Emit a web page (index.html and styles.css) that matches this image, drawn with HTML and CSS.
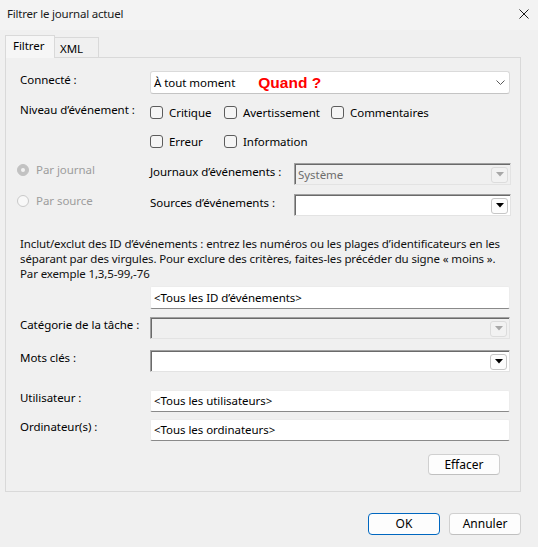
FILE: index.html
```html
<!DOCTYPE html>
<html lang="fr">
<head>
<meta charset="utf-8">
<title>Filtrer le journal actuel</title>
<link rel="stylesheet" href="styles.css">
</head>
<body>
<div class="titlebar">
  <span class="title">Filtrer le journal actuel</span>
  <svg class="close" width="10" height="10" viewBox="0 0 10 10"><path d="M0.5 0.5L9.5 9.5M9.5 0.5L0.5 9.5" stroke="#1a1a1a" stroke-width="1" fill="none"/></svg>
</div>
<div class="tabs">
  <div class="tab tab-active">Filtrer</div>
  <div class="tab">XML</div>
</div>
<div class="panel">
  <div class="row row-when">
    <span class="lbl lbl-when">Connecté :</span>
    <div class="combo-modern">
      <span class="val">À tout moment</span>
      <span class="when">Quand ?</span>
      <svg class="chev" width="9" height="5" viewBox="0 0 9 5"><path d="M0.5 0.5L4.5 4.5L8.5 0.5" stroke="#5a5a5a" stroke-width="1" fill="none"/></svg>
    </div>
  </div>
  <div class="levels">
    <span class="lbl lbl-level">Niveau d’événement :</span>
    <span class="chk"><span class="box"></span>Critique</span>
    <span class="chk"><span class="box"></span>Avertissement</span>
    <span class="chk"><span class="box"></span>Commentaires</span>
    <span class="chk chk-r2"><span class="box"></span>Erreur</span>
    <span class="chk"><span class="box"></span>Information</span>
  </div>
  <div class="srcrow srcrow-first">
    <span class="radio-item"><span class="radio radio-on"></span>Par journal</span>
    <span class="lbl lbl-src">Journaux d’événements :</span>
    <div class="combo-legacy combo-disabled">
      <span class="val">Système</span>
      <span class="dd"><svg width="8" height="5" viewBox="0 0 8 5"><path d="M0 0H8L4 4.5Z" fill="#a8a8a8"/></svg></span>
    </div>
  </div>
  <div class="srcrow">
    <span class="radio-item"><span class="radio"></span>Par source</span>
    <span class="lbl lbl-src">Sources d’événements :</span>
    <div class="combo-legacy">
      <span class="val"></span>
      <span class="dd"><svg width="8" height="5" viewBox="0 0 8 5"><path d="M0 0H8L4 4.5Z" fill="#000"/></svg></span>
    </div>
  </div>
  <p class="help">Inclut/exclut des ID d’événements : entrez les numéros ou les plages d’identificateurs en les<br>séparant par des virgules. Pour exclure des critères, faites-les précéder du signe « moins ».<br>Par exemple 1,3,5-99,-76</p>
  <div class="textbox textbox-id">&lt;Tous les ID d’événements&gt;</div>
  <div class="row row-cat">
    <span class="lbl">Catégorie de la tâche :</span>
    <div class="combo-legacy combo-disabled combo-wide">
      <span class="val"></span>
      <span class="dd"><svg width="8" height="5" viewBox="0 0 8 5"><path d="M0 0H8L4 4.5Z" fill="#a8a8a8"/></svg></span>
    </div>
  </div>
  <div class="row row-kw">
    <span class="lbl">Mots clés :</span>
    <div class="combo-legacy combo-wide">
      <span class="val"></span>
      <span class="dd"><svg width="8" height="5" viewBox="0 0 8 5"><path d="M0 0H8L4 4.5Z" fill="#000"/></svg></span>
    </div>
  </div>
  <div class="row row-user">
    <span class="lbl">Utilisateur :</span>
    <div class="textbox">&lt;Tous les utilisateurs&gt;</div>
  </div>
  <div class="row row-comp">
    <span class="lbl">Ordinateur(s) :</span>
    <div class="textbox">&lt;Tous les ordinateurs&gt;</div>
  </div>
  <div class="clear-row">
    <button class="btn btn-clear">Effacer</button>
  </div>
</div>
<div class="footer">
  <button class="btn btn-ok">OK</button>
  <button class="btn">Annuler</button>
</div>
</body>
</html>
```
FILE: styles.css
```css
* { box-sizing: border-box; }
html, body { margin: 0; padding: 0; }
body {
  width: 538px;
  height: 547px;
  overflow: hidden;
  background: #f0f0f0;
  font-family: "Noto Sans", "Open Sans", sans-serif;
  font-size: 11.5px;
  letter-spacing: -0.05px;
  color: #000;
}

.titlebar {
  height: 30px;
  display: flex;
  align-items: flex-start;
  justify-content: space-between;
  padding: 0 9px 0 7px;
  background: #f3f3f3;
}
.title { line-height: 16px; margin-top: 6px; color: #1a1a1a; letter-spacing: -0.2px; }
.close { margin-top: 9px; }

.tabs {
  height: 27px;
  display: flex;
  align-items: flex-end;
  padding-left: 5px;
}
.tab {
  height: 20px;
  width: 44px;
  border: 1px solid #d9d9d9;
  border-bottom: none;
  border-left: none;
  background: #f0f0f0;
  padding: 3px 0 0 5px;
  line-height: 16px;
}
.tab-active {
  position: relative;
  z-index: 1;
  height: 23px;
  width: 50px;
  margin-bottom: -1px;
  border-left: 1px solid #d9d9d9;
  background: #f6f6f6;
  padding: 2px 0 0 7px;
}

.panel {
  margin-left: 5px;
  width: 516px;
  height: 435px;
  border: 1px solid #d9d9d9;
  padding: 13px 10px 0 14px;
}

.lbl { line-height: 16px; white-space: nowrap; }

.row {
  display: grid;
  grid-template-columns: 130px 360px;
  align-items: start;
}
.lbl-when { margin-top: 1px; }

.combo-modern {
  height: 23px;
  display: flex;
  align-items: center;
  background: #fff;
  border: 1px solid #dadada;
  border-bottom-color: #c4c4c4;
  border-radius: 3px;
  padding: 0 4px 0 3px;
}
.combo-modern .val { line-height: 16px; }
.when {
  color: #ff0000;
  font-family: "Liberation Sans", Arial, sans-serif;
  font-weight: bold;
  font-size: 15.5px;
  letter-spacing: 0;
  margin-left: 23px;
  line-height: 17px;
}
.chev { margin-left: auto; }

.levels {
  margin-top: 8px;
  display: grid;
  grid-template-columns: 130px 74px 107px auto;
  grid-auto-rows: 20px;
  row-gap: 9px;
  align-items: center;
}
.lbl-level { align-self: start; }
.chk-r2 { grid-column: 2; }
.chk {
  display: flex;
  align-items: center;
  gap: 6px;
  line-height: 16px;
  white-space: nowrap;
  padding-top: 1px;
}
.box {
  width: 13px;
  height: 13px;
  border: 1px solid #5c5c5c;
  border-radius: 3px;
  background: #f5f5f5;
  flex: none;
}

.srcrow {
  margin-top: 9px;
  display: flex;
  align-items: flex-start;
}
.srcrow-first { margin-top: 12px; }
.radio-item {
  width: 133px;
  margin-left: -3px;
  margin-top: -1px;
  display: flex;
  align-items: center;
  gap: 7px;
  color: #9d9d9d;
  line-height: 16px;
  flex: none;
}
.radio {
  width: 12px;
  height: 12px;
  border-radius: 50%;
  border: 1px solid #c9c9c9;
  background: #f8f8f8;
  display: flex;
  align-items: center;
  justify-content: center;
  flex: none;
}
.radio-on {
  background: #c2c2c2;
  border-color: #c2c2c2;
}
.radio-on::after {
  content: "";
  width: 4px;
  height: 4px;
  border-radius: 50%;
  background: #f2f2f2;
}
.lbl-src { width: 144px; margin-top: 1px; flex: none; }

.combo-legacy {
  width: 217px;
  height: 22px;
  display: flex;
  align-items: center;
  justify-content: space-between;
  background: #fff;
  border: 1px solid;
  border-color: #a0a0a0 #e3e3e3 #e3e3e3 #a0a0a0;
  box-shadow: inset 1px 1px 0 #6a6a6a;
  padding: 1px 2px 0 3px;
  flex: none;
}
.combo-wide { width: 360px; }
.combo-disabled { background: #f0f0f0; }
.combo-disabled .val { color: #6d6d6d; }
.combo-legacy .val { line-height: 16px; }
.dd {
  width: 17px;
  height: 16px;
  border: 1px solid #c6c6c6;
  border-radius: 3px;
  background: #fdfdfd;
  display: flex;
  align-items: center;
  justify-content: center;
}
.combo-disabled .dd { border-color: #dcdcdc; background: #f2f2f2; }

.help {
  margin: 20px 0 0;
  line-height: 15px;
  white-space: nowrap;
  letter-spacing: -0.13px;
  color: #111;
}

.textbox {
  height: 22px;
  background: #fff;
  border: 1px solid #ececec;
  border-bottom-color: #8a8a8a;
  border-radius: 2px;
  padding: 0 3px;
  line-height: 20px;
  white-space: nowrap;
}
.textbox-id { margin: 5px 0 0 130px; width: 360px; height: 23px; line-height: 21px; }

.row-cat { margin-top: 8px; }
.row-kw { margin-top: 11px; }
.row-user { margin-top: 18px; }
.row-comp { margin-top: 7px; }

.clear-row {
  margin-top: 13px;
  display: flex;
  justify-content: flex-end;
  padding-right: 10px;
}

.btn {
  font-family: inherit;
  font-size: 12px;
  color: #000;
  width: 72px;
  height: 21px;
  padding: 0;
  background: #fdfdfd;
  border: 1px solid #d0d0d0;
  border-bottom-color: #c0c0c0;
  border-radius: 4px;
  line-height: 18px;
}
.footer {
  margin-top: 21px;
  display: flex;
  justify-content: flex-end;
  gap: 9px;
  padding-right: 17px;
}
.footer .btn { height: 22px; width: 72px; }
.btn-ok { border: 1px solid #0067c0; }
```
